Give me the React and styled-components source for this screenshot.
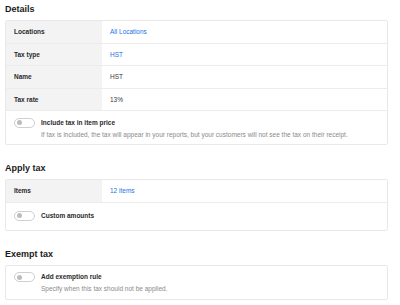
import styled, { createGlobalStyle } from "styled-components";

const GlobalStyle = createGlobalStyle`
  body {
    margin: 0;
    background: #fff;
    font-family: "Liberation Sans", Arial, sans-serif;
    color: #1f1f1f;
  }
`;

const Page = styled.div`
  padding: 2px 12px 0 5px;
`;

const Heading = styled.h2`
  margin: ${({ first }) => (first ? "0" : "16px")} 0 4px;
  font-size: 9px;
  line-height: 14px;
  font-weight: 700;
  color: #1a1a1a;
`;

const Card = styled.div`
  border: 1px solid #e8e8e8;
  border-radius: 2px;
`;

const Row = styled.div`
  display: flex;
  height: 21.5px;
  border-top: ${({ first }) => (first ? "none" : "1px solid #ececec")};
  font-size: 6.5px;
`;

const Label = styled.div`
  width: 96px;
  flex: none;
  display: flex;
  align-items: center;
  padding-left: 8px;
  box-sizing: border-box;
  background: #f3f3f3;
  font-weight: 700;
  color: #2a2a2a;
`;

const Value = styled.div`
  display: flex;
  align-items: center;
  padding-left: 8px;
  color: ${({ link }) => (link ? "#1a73e8" : "#3a3a3a")};
`;

const ToggleRow = styled.div`
  display: flex;
  align-items: flex-start;
  gap: 6px;
  padding: ${({ pad }) => pad || "6.5px 8px 5.5px"};
  border-top: ${({ first }) => (first ? "none" : "1px solid #ececec")};
`;

const Switch = styled.div`
  flex: none;
  width: 19px;
  height: 8px;
  border: 1px solid #cfcfcf;
  border-radius: 6px;
  background: #fff;
  position: relative;

  &::after {
    content: "";
    position: absolute;
    left: 2px;
    top: 1.5px;
    width: 5px;
    height: 5px;
    border-radius: 50%;
    background: #bdbdbd;
  }
`;

const ToggleText = styled.div`
  display: flex;
  flex-direction: column;
  gap: 2px;
`;

const ToggleTitle = styled.div`
  font-size: 6.5px;
  line-height: 10px;
  font-weight: 700;
  color: #2a2a2a;
`;

const ToggleDesc = styled.div`
  font-size: 6.5px;
  line-height: 9px;
  color: #8a8a8a;
  white-space: nowrap;
`;

const Toggle = ({ title, desc, first, pad }) => (
  <ToggleRow first={first} pad={pad}>
    <Switch />
    <ToggleText>
      <ToggleTitle>{title}</ToggleTitle>
      {desc && <ToggleDesc>{desc}</ToggleDesc>}
    </ToggleText>
  </ToggleRow>
);

const details = [
  ["Locations", "All Locations", true],
  ["Tax type", "HST", true],
  ["Name", "HST", false],
  ["Tax rate", "13%", false],
];

export default function App() {
  return (
    <Page>
      <GlobalStyle />
      <Heading first>Details</Heading>
      <Card>
        {details.map(([label, value, link], idx) => (
          <Row key={label} first={idx === 0}>
            <Label>{label}</Label>
            <Value link={link}>{value}</Value>
          </Row>
        ))}
        <Toggle
          title="Include tax in item price"
          desc="If tax is included, the tax will appear in your reports, but your customers will not see the tax on their receipt."
        />
      </Card>

      <Heading>Apply tax</Heading>
      <Card>
        <Row first>
          <Label>Items</Label>
          <Value link>12 items</Value>
        </Row>
        <Toggle title="Custom amounts" pad="8px 8px 9px" />
      </Card>

      <Heading>Exempt tax</Heading>
      <Card>
        <Toggle
          first
          title="Add exemption rule"
          desc="Specify when this tax should not be applied."
        />
      </Card>
    </Page>
  );
}
